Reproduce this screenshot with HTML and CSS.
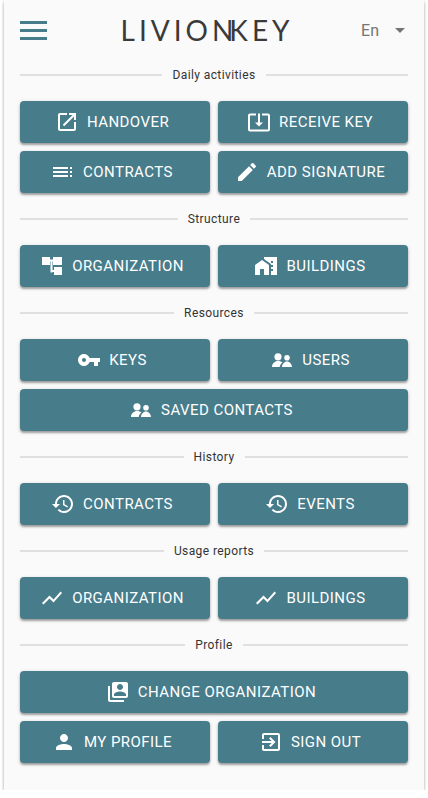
FILE: index.html
```html
<!DOCTYPE html>
<html lang="en">
<head>
  <meta charset="UTF-8">
  <meta name="viewport" content="width=device-width, initial-scale=1.0">
  <title>Livion Key</title>
  <link rel="stylesheet" href="styles.css">
</head>
<body>
  <svg class="sprite" width="0" height="0">
    <symbol id="i-handover" viewBox="0 0 24 24"><path d="M19 19H5V5h7V3H5c-1.11 0-2 .9-2 2v14c0 1.1.89 2 2 2h14c1.1 0 2-.9 2-2v-7h-2v7zM14 3v2h3.59l-9.83 9.83 1.41 1.41L19 6.41V10h2V3h-7z"/></symbol>
    <symbol id="i-receive" viewBox="0 0 24 24"><path d="M12 16.5l4-4h-3v-9h-2v9H8l4 4zm9-13h-6v1.99h6v14.03H3V5.49h6V3.5H3c-1.1 0-2 .9-2 2v14c0 1.1.9 2 2 2h18c1.1 0 2-.9 2-2v-14c0-1.1-.9-2-2-2z"/></symbol>
    <symbol id="i-contracts" viewBox="0 0 24 24"><path d="M2 7h15v2H2zM2 11h15v2H2zM2 15h15v2H2zM19 7h2v2h-2zM19 11h2v2h-2zM19 15h2v2h-2z"/></symbol>
    <symbol id="i-edit" viewBox="0 0 24 24"><path d="M3 17.25V21h3.75L17.81 9.94l-3.75-3.75L3 17.25zM20.71 7.04c.39-.39.39-1.02 0-1.41l-2.34-2.34c-.39-.39-1.02-.39-1.41 0l-1.83 1.83 3.75 3.75 1.83-1.83z"/></symbol>
    <symbol id="i-org" viewBox="0 0 24 24"><path d="M2 3h8v8H2zM13 3h9v8h-9zM10 5.5h3v2h-3zM10.5 7.5h2v11h-2zM12.5 16H14v2h-1.5zM14 13h8v8h-8z"/></symbol>
    <symbol id="i-home" viewBox="0 0 24 24"><path d="M1 11v10h5v-6h4v6h5V11L8 6zM10 3v1.97l7 5.03V11h2v2h-2v2h2v2h-2v4h6V3H10zm9 6h-2V7h2v2z"/></symbol>
    <symbol id="i-key" viewBox="0 0 24 24"><path d="M12.65 10C11.83 7.67 9.61 6 7 6c-3.31 0-6 2.69-6 6s2.69 6 6 6c2.61 0 4.83-1.67 5.65-4H17v4h4v-4h2v-4H12.65zM7 14c-1.1 0-2-.9-2-2s.9-2 2-2 2 .9 2 2-.9 2-2 2z"/></symbol>
    <symbol id="i-people" viewBox="0 0 24 24"><circle cx="8" cy="8.8" r="3.6"/><circle cx="17" cy="9.8" r="2.8"/><path d="M2 19c0-3.5 3-6 6-6 2 0 3.5.6 4.5 1.5-1.5 1-2.5 2.5-2.8 4.5zM12 19c0-3 2.5-5.5 5-5.5s5 2.5 5 5.5z"/></symbol>
    <symbol id="i-history" viewBox="0 0 24 24"><path d="M13 3c-4.97 0-9 4.03-9 9H1l3.89 3.89.07.14L9 12H6c0-3.87 3.13-7 7-7s7 3.13 7 7-3.13 7-7 7c-1.93 0-3.68-.79-4.94-2.06l-1.42 1.42C8.27 19.99 10.51 21 13 21c4.97 0 9-4.03 9-9s-4.03-9-9-9zm-1 5v5l4.28 2.54.72-1.21-3.5-2.08V8H12z"/></symbol>
    <symbol id="i-chart" viewBox="0 0 24 24"><path d="M3.5 18.49l6-6.01 4 4L22 6.92l-1.41-1.41-7.09 7.97-4-4L2 16.99z"/></symbol>
    <symbol id="i-switch" viewBox="0 0 24 24"><path d="M4 6H2v14c0 1.1.9 2 2 2h14v-2H4V6zm16-4H8c-1.1 0-2 .9-2 2v12c0 1.1.9 2 2 2h12c1.1 0 2-.9 2-2V4c0-1.1-.9-2-2-2zm-6 2c1.66 0 3 1.34 3 3s-1.34 3-3 3-3-1.34-3-3 1.34-3 3-3zm6 12H8v-1.5c0-1.99 4-3 6-3s6 1.01 6 3V16z"/></symbol>
    <symbol id="i-person" viewBox="0 0 24 24"><path d="M12 12c2.21 0 4-1.79 4-4s-1.79-4-4-4-4 1.79-4 4 1.79 4 4 4zm0 2c-2.67 0-8 1.34-8 4v2h16v-2c0-2.66-5.33-4-8-4z"/></symbol>
    <symbol id="i-exit" viewBox="0 0 24 24"><path d="M10.09 15.59L11.5 17l5-5-5-5-1.41 1.41L12.67 11H3v2h9.67l-2.58 2.59zM19 3H5c-1.11 0-2 .9-2 2v4h2V5h14v14H5v-4H3v4c0 1.1.89 2 2 2h14c1.1 0 2-.9 2-2V5c0-1.1-.9-2-2-2z"/></symbol>
  </svg>

  <div class="card">
    <header class="topbar">
      <button class="menu-btn" aria-label="Menu">
        <span></span><span></span><span></span>
      </button>
      <div class="logo">LIVIO<span class="logo-n">N</span>KEY</div>
      <div class="lang">
        <span>En</span>
        <i class="caret"></i>
      </div>
    </header>

    <div class="divider"><span>Daily activities</span></div>
    <div class="btn-grid">
      <a class="btn"><svg><use href="#i-handover"/></svg>Handover</a>
      <a class="btn"><svg><use href="#i-receive"/></svg>Receive key</a>
      <a class="btn"><svg><use href="#i-contracts"/></svg>Contracts</a>
      <a class="btn"><svg><use href="#i-edit"/></svg>Add signature</a>
    </div>

    <div class="divider"><span>Structure</span></div>
    <div class="btn-grid">
      <a class="btn"><svg><use href="#i-org"/></svg>Organization</a>
      <a class="btn"><svg><use href="#i-home"/></svg>Buildings</a>
    </div>

    <div class="divider"><span>Resources</span></div>
    <div class="btn-grid">
      <a class="btn"><svg><use href="#i-key"/></svg>Keys</a>
      <a class="btn"><svg><use href="#i-people"/></svg>Users</a>
      <a class="btn wide"><svg><use href="#i-people"/></svg>Saved contacts</a>
    </div>

    <div class="divider"><span>History</span></div>
    <div class="btn-grid">
      <a class="btn"><svg><use href="#i-history"/></svg>Contracts</a>
      <a class="btn"><svg><use href="#i-history"/></svg>Events</a>
    </div>

    <div class="divider"><span>Usage reports</span></div>
    <div class="btn-grid">
      <a class="btn"><svg><use href="#i-chart"/></svg>Organization</a>
      <a class="btn"><svg><use href="#i-chart"/></svg>Buildings</a>
    </div>

    <div class="divider"><span>Profile</span></div>
    <div class="btn-grid">
      <a class="btn wide"><svg><use href="#i-switch"/></svg>Change organization</a>
      <a class="btn"><svg><use href="#i-person"/></svg>My profile</a>
      <a class="btn"><svg><use href="#i-exit"/></svg>Sign out</a>
    </div>
  </div>
</body>
</html>
```

FILE: styles.css
```css
body {
  background-color: #fff;
  color: #333;
  font-family: Roboto, sans-serif;
  margin: 0;
  padding: 0 4px;
}

.sprite {
  position: absolute;
}

.card {
  background-color: #fafafa;
  height: 790px;
  box-sizing: border-box;
  padding: 0 16px;
  box-shadow: 0 3px 3px rgba(0, 0, 0, 0.22), 0 0 3px rgba(0, 0, 0, 0.18);
}

.topbar {
  display: flex;
  align-items: center;
  justify-content: space-between;
  height: 60px;
  margin-bottom: 5px;
}

.menu-btn {
  display: flex;
  flex-direction: column;
  gap: 5px;
  width: 27px;
  padding: 0;
  border: none;
  background: none;
}

.menu-btn span {
  display: block;
  height: 3px;
  background-color: #477c8b;
}

.logo {
  flex: 1;
  text-align: center;
  font-family: Lato, sans-serif;
  font-weight: 400;
  font-size: 28px;
  line-height: 28px;
  letter-spacing: 4px;
  color: #3a3a3a;
  padding-left: 6px;
}

.logo-n {
  letter-spacing: -4px;
}

.lang {
  display: flex;
  align-items: center;
  gap: 16px;
  color: #757575;
  font-size: 16px;
  padding-right: 3px;
}

.caret {
  width: 0;
  height: 0;
  border-left: 5px solid transparent;
  border-right: 5px solid transparent;
  border-top: 5px solid #757575;
}

.divider {
  display: flex;
  align-items: center;
  gap: 10px;
  height: 20px;
  margin-bottom: 16px;
  font-size: 12px;
  letter-spacing: 0.4px;
  color: #333;
}

.divider::before,
.divider::after {
  content: "";
  flex: 1;
  height: 2px;
  background-color: #e0e0e0;
}

.btn-grid {
  display: grid;
  grid-template-columns: 1fr 1fr;
  gap: 8px;
  margin-bottom: 16px;
}

.btn {
  display: flex;
  align-items: center;
  justify-content: center;
  height: 42px;
  padding-right: 6px;
  background-color: #477c8b;
  color: #fff;
  border-radius: 4px;
  font-size: 15px;
  font-weight: 450;
  letter-spacing: 0.45px;
  text-transform: uppercase;
  box-shadow: 0 2px 2px rgba(0, 0, 0, 0.3), 0 1px 4px rgba(0, 0, 0, 0.14);
}

.btn svg {
  width: 24px;
  height: 24px;
  margin-right: 8px;
  fill: #fff;
  flex: none;
}

.wide {
  grid-column: span 2;
}
```
